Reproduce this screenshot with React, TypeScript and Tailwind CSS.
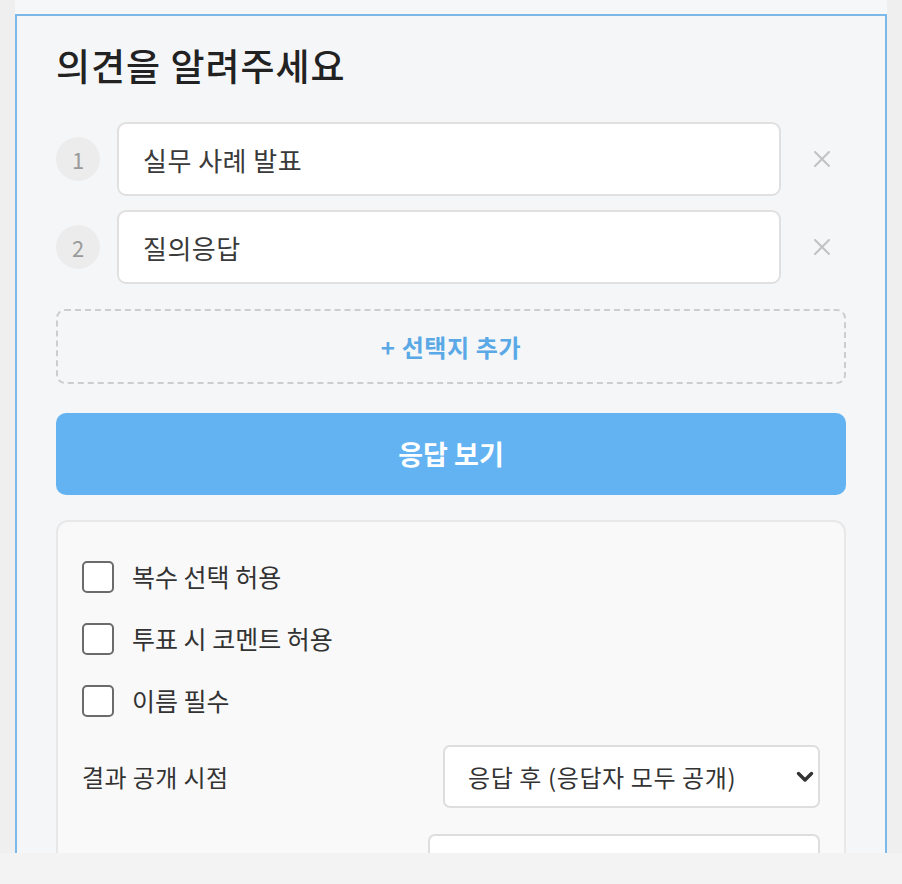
import { useState } from "react";

const options = ["실무 사례 발표", "질의응답"];

const toggles = [
  { id: "multi", label: "복수 선택 허용" },
  { id: "comment", label: "투표 시 코멘트 허용" },
  { id: "name", label: "이름 필수" },
];

function XIcon() {
  return (
    <svg width="18" height="18" viewBox="0 0 18 18" fill="none" stroke="#c2c2c2" strokeWidth="2" strokeLinecap="round">
      <path d="M2 2l14 14M16 2L2 16" />
    </svg>
  );
}

function Chevron() {
  return (
    <svg width="18" height="12" viewBox="0 0 18 12" fill="none" stroke="#333" strokeWidth="3.4" strokeLinecap="round" strokeLinejoin="round">
      <path d="M2.5 2.5L9 9l6.5-6.5" />
    </svg>
  );
}

export default function App() {
  const [checked, setChecked] = useState<Record<string, boolean>>({});

  return (
    <div
      className="h-[884px] bg-[#f3f3f3] flex flex-col"
      style={{ fontFamily: '"Noto Sans CJK KR", "Noto Sans", sans-serif' }}
    >
      <div className="h-[853px] overflow-hidden bg-[#efefef] px-[15px]">
        <div className="bg-[#f5f6f8] min-h-full">
          {/* end of the card above */}
          <div className="h-[14px] bg-[#f6f7f8]" />

          <section className="border-2 border-[#7db9e8] bg-[#f5f6f8] px-[39px] pt-[26px] pb-10">
            <h2 className="text-[37px] leading-[46px] font-medium text-[#222] tracking-[1px]">
              의견을 알려주세요
            </h2>

            <div className="mt-[34px] flex flex-col gap-[14px]">
              {options.map((opt, i) => (
                <div key={i} className="flex items-center">
                  <div className="w-[44px] h-[44px] rounded-full bg-[#ececec] flex items-center justify-center text-[22px] text-[#9a9a9a]">
                    {i + 1}
                  </div>
                  <div className="ml-[17px] flex-1 h-[74px] bg-white border-2 border-[#e0e0e0] rounded-[9px] flex items-center px-[24px] text-[26px] tracking-[0.5px] text-[#3a3a3a]">
                    {opt}
                  </div>
                  <button className="ml-[17px] w-[48px] flex justify-center">
                    <XIcon />
                  </button>
                </div>
              ))}
            </div>

            <button className="mt-[25px] w-full h-[75px] border-2 border-dashed border-[#cdcdcd] rounded-[9px] flex items-center justify-center text-[24px] tracking-[0.6px] font-semibold text-[#5aa9e6]">
              + 선택지 추가
            </button>

            <button className="mt-[29px] w-full h-[82px] bg-[#63b3f3] rounded-[10px] flex items-center justify-center text-[27px] font-bold text-white">
              응답 보기
            </button>

            <div className="mt-[25px] bg-[#f9f9f9] border-2 border-[#e8e8e8] rounded-[12px] px-[24px] pt-[31px] pb-6">
              <div className="flex flex-col gap-[14px]">
                {toggles.map((t) => (
                  <label key={t.id} className="h-[48px] flex items-center gap-[18px] cursor-pointer">
                    <span
                      onClick={() => setChecked({ ...checked, [t.id]: !checked[t.id] })}
                      className="w-[32px] h-[32px] rounded-[5px] border-2 border-[#6b6b6b] bg-white"
                    />
                    <span className="text-[25px] text-[#333]">{t.label}</span>
                  </label>
                ))}
              </div>

              <div className="mt-[20px] flex items-center justify-between">
                <span className="text-[24px] tracking-[0.4px] text-[#333]">결과 공개 시점</span>
                <div className="w-[377px] h-[63px] bg-white border-2 border-[#dedede] rounded-[7px] flex items-center justify-between pl-[23px] pr-[4px] text-[24px] tracking-[0.6px] text-[#333]">
                  <span>응답 후 (응답자 모두 공개)</span>
                  <Chevron />
                </div>
              </div>

              <div className="mt-[26px] flex items-center justify-between">
                <span className="text-[24px] tracking-[0.4px] text-[#333]">투표 마감</span>
                <div className="w-[392px] h-[63px] bg-white border-2 border-[#dedede] rounded-[7px] flex items-center justify-between pl-[36px] pr-[4px] text-[24px] tracking-[0.6px] text-[#333]">
                  <span>마감 없음 (수동 종료)</span>
                  <Chevron />
                </div>
              </div>
            </div>
          </section>
        </div>
      </div>
    </div>
  );
}
